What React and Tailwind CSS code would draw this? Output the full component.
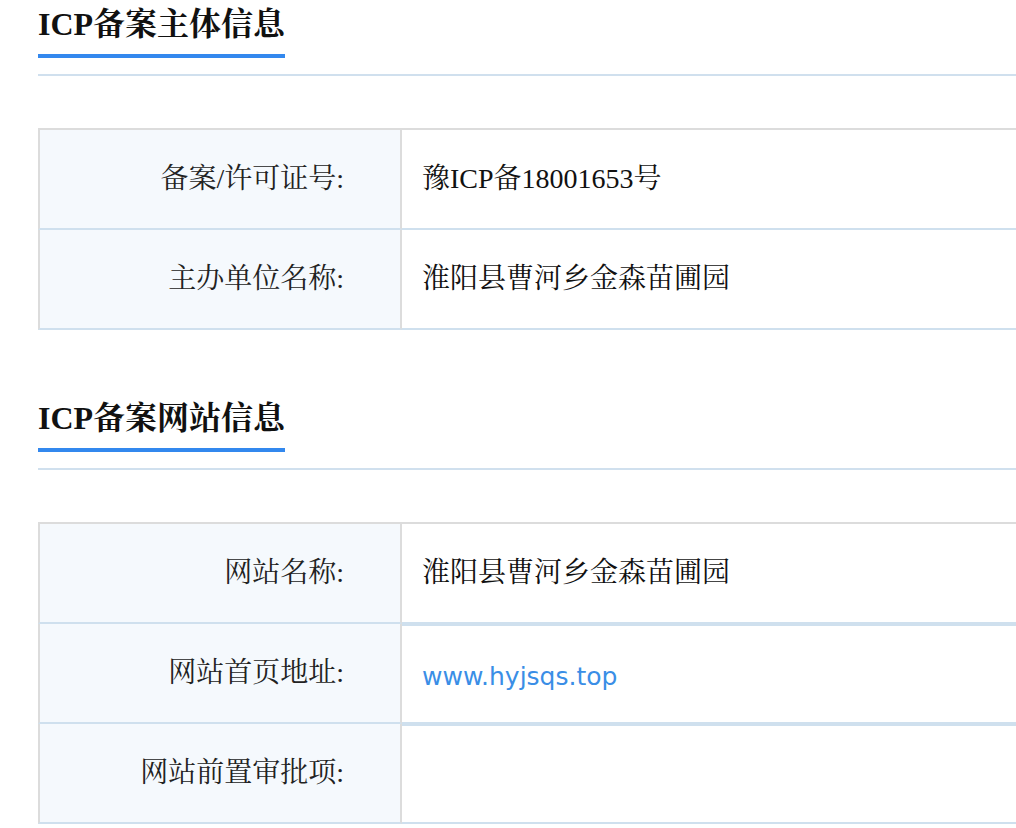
const sections = [
  {
    title: "ICP备案主体信息",
    rows: [
      { label: "备案/许可证号:", value: "豫ICP备18001653号" },
      { label: "主办单位名称:", value: "淮阳县曹河乡金森苗圃园" },
    ],
  },
  {
    title: "ICP备案网站信息",
    thick: true,
    rows: [
      { label: "网站名称:", value: "淮阳县曹河乡金森苗圃园" },
      { label: "网站首页地址:", value: "www.hyjsqs.top", link: true },
      { label: "网站前置审批项:", value: "" },
    ],
  },
];

const serif = { fontFamily: '"Liberation Serif", "Noto Serif CJK SC", serif' };

const InfoRow = ({ row, topLine }) => (
  <div className="flex h-[100px]">
    <div className="w-[364px] shrink-0 bg-[#f5f9fd] border-l-2 border-r-2 border-b-2 border-l-[#dcdcdc] border-r-[#dcdcdc] border-b-[#cfe0ee] flex items-center justify-end pr-[56px] text-[28px] text-[#222]">
      {row.label}
    </div>
    <div
      className={`flex-1 border-b-2 border-b-[#cfe0ee] flex items-center pl-[20px] text-[28px] text-[#111] ${
        topLine ? "border-t-2 border-t-[#cfe0ee]" : ""
      }`}
    >
      {row.link ? (
        <a
          href="#"
          className="text-[25px] text-[#3a8ee6] pt-[6px]"
          style={{ fontFamily: '"DejaVu Sans", Verdana, sans-serif' }}
        >
          {row.value}
        </a>
      ) : (
        row.value
      )}
    </div>
  </div>
);

export default function App() {
  return (
    <div className="w-[1016px] h-[828px] overflow-hidden bg-white" style={serif}>
      <div className="pl-[38px] w-[1100px]">
        {sections.map((s, i) => (
          <div key={s.title} className={i > 0 ? "mt-[64px]" : ""}>
            {/* heading with blue underline */}
            <div className="border-b-2 border-[#d0e0ee] pb-[16px]">
              <h2 className="inline-block text-[32px] leading-[48px] font-bold text-[#111] pb-[6px] border-b-4 border-[#3388ee]">
                {s.title}
              </h2>
            </div>
            <div className="mt-[52px] border-t-2 border-[#dcdcdc]">
              {s.rows.map((r, j) => (
                <InfoRow key={r.label} row={r} topLine={s.thick && j > 0} />
              ))}
            </div>
          </div>
        ))}
      </div>
    </div>
  );
}
